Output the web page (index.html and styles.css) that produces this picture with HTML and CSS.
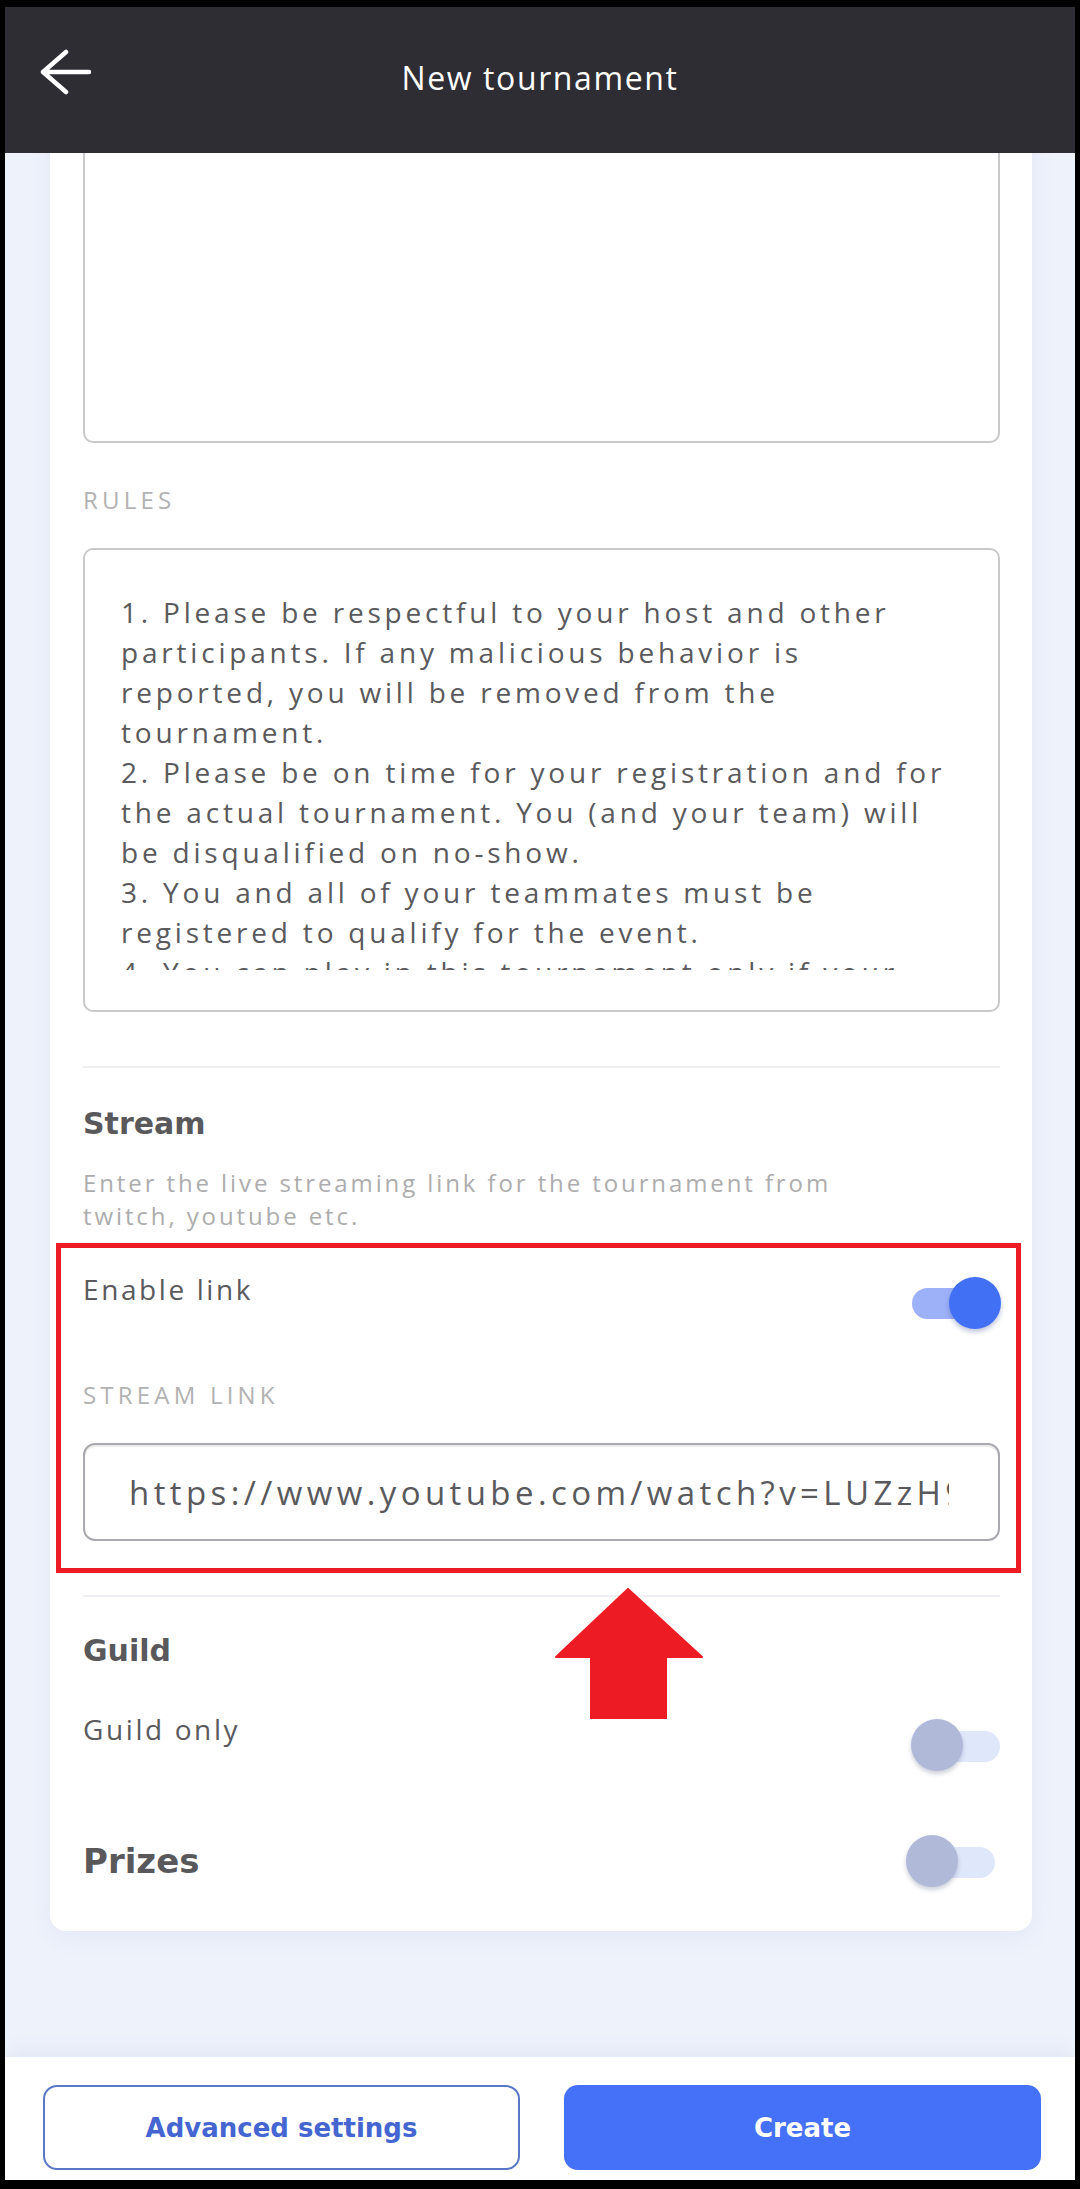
FILE: index.html
```html
<!DOCTYPE html>
<html lang="en">
<head>
<meta charset="UTF-8">
<meta name="viewport" content="width=device-width, initial-scale=1.0">
<title>New tournament</title>
<link rel="stylesheet" href="styles.css">
</head>
<body>
<div class="screen">
    <header class="topbar">
        <svg class="back" viewBox="0 0 52 48" width="52" height="48">
            <path d="M26 4 L3 24 L26 44 M3 24 H49" fill="none" stroke="#fff" stroke-width="4.5" stroke-linecap="round" stroke-linejoin="round"/>
        </svg>
        <h1 class="title">New tournament</h1>
        <span></span>
    </header>

    <main class="content">
        <section class="card">
            <div class="textbox textbox-desc"></div>

            <div class="field-label rules-label">Rules</div>
            <div class="textbox textbox-rules">
                <div class="rules-text">
                    <div>1. Please be respectful to your host and other</div>
                    <div>participants. If any malicious behavior is</div>
                    <div>reported, you will be removed from the</div>
                    <div>tournament.</div>
                    <div>2. Please be on time for your registration and for</div>
                    <div>the actual tournament. You (and your team) will</div>
                    <div>be disqualified on no-show.</div>
                    <div>3. You and all of your teammates must be</div>
                    <div>registered to qualify for the event.</div>
                    <div>4. You can play in this tournament only if your</div>
                </div>
            </div>

            <hr class="divider">

            <h2 class="section-title">Stream</h2>
            <p class="section-desc">Enter the live streaming link for the tournament from<br>twitch, youtube etc.</p>

            <div class="stream-link">
                <div class="toggle-row">
                    <span class="row-label">Enable link</span>
                    <div class="toggle toggle-on"><span class="track"></span><span class="knob"></span></div>
                </div>
                <div class="field-label stream-label">Stream link</div>
                <input class="text-input" type="text" readonly value="https://www.youtube.com/watch?v=LUZzH9">

                <div class="highlight"></div>
                <svg class="pointer" viewBox="0 0 148 131" width="148" height="131">
                    <polygon points="73,1 147,69 111,69 111,131 36,131 36,69 1,69" fill="#ed1c24" stroke="#ed1c24" stroke-width="2" stroke-linejoin="round"/>
                </svg>
            </div>

            <hr class="divider">

            <h2 class="section-title guild-title">Guild</h2>
            <div class="toggle-row guild-row">
                <span class="row-label">Guild only</span>
                <div class="toggle toggle-off"><span class="track"></span><span class="knob"></span></div>
            </div>

            <div class="toggle-row prizes-row">
                <h2 class="prizes-title">Prizes</h2>
                <div class="toggle toggle-off"><span class="track"></span><span class="knob"></span></div>
            </div>
        </section>
    </main>

    <footer class="actions">
        <button class="btn btn-outline">Advanced settings</button>
        <button class="btn btn-primary">Create</button>
    </footer>
</div>
</body>
</html>
```

FILE: styles.css
```css
* {
    box-sizing: border-box;
}
body {
    margin: 0;
    background-color: #000;
    font-family: "Open Sans", "Noto Sans", sans-serif;
}
.screen {
    width: 1070px;
    height: 2173px;
    margin: 7px 5px 0;
    display: flex;
    flex-direction: column;
    overflow: hidden;
}

/* barra superior */
.topbar {
    flex: none;
    height: 146px;
    padding-bottom: 5px;
    background-color: #2e2d33;
    display: grid;
    grid-template-columns: 90px 1fr 90px;
    align-items: center;
}
.back {
    align-self: start;
    margin: 41px 0 0 35px;
}
.title {
    margin: 0;
    font-size: 32px;
    line-height: 40px;
    font-weight: 400;
    letter-spacing: 1.6px;
    color: #fff;
    text-align: center;
}

/* contenido */
.content {
    flex: 1;
    min-height: 0;
    overflow: hidden;
    background-color: #eef2fb;
    padding: 0 43px 0 45px;
}
.card {
    margin-top: -120px;
    padding: 33px 32px 44px 33px;
    background-color: #fff;
    border-radius: 16px;
    box-shadow: 0 6px 24px rgba(80, 100, 170, 0.07);
}
.textbox {
    border: 2px solid #c9c9c9;
    border-radius: 10px;
    background-color: #fff;
}
.textbox-desc {
    height: 377px;
}
.field-label {
    font-size: 24px;
    line-height: 30px;
    letter-spacing: 4.2px;
    color: #b2b2b2;
    text-transform: uppercase;
}
.rules-label {
    margin: 42px 0 33px;
}
.textbox-rules {
    height: 464px;
    padding: 42px 30px 40px 36px;
}
.rules-text {
    height: 100%;
    overflow: hidden;
    font-size: 28px;
    line-height: 40px;
    letter-spacing: 3.8px;
    color: #5a5a5d;
    white-space: nowrap;
}
.divider {
    border: 0;
    height: 2px;
    margin: 54px 0 0;
    background-color: #eff0f3;
}
.section-title {
    margin: 37px 0 0;
    font-family: "DejaVu Sans", sans-serif;
    font-weight: 700;
    font-size: 30px;
    line-height: 38px;
    color: #59595c;
}
.section-desc {
    margin: 23px 0 0;
    font-size: 24px;
    line-height: 33px;
    letter-spacing: 2.9px;
    color: #adadad;
    white-space: nowrap;
}

/* enlace del stream */
.stream-link {
    position: relative;
    margin-top: 37px;
}
.toggle-row {
    display: flex;
    justify-content: space-between;
    align-items: flex-start;
}
.row-label {
    font-size: 28px;
    line-height: 40px;
    letter-spacing: 2.6px;
    color: #5a5a5d;
}
.stream-label {
    margin-top: 51px;
}
.text-input {
    display: block;
    width: 100%;
    height: 98px;
    margin-top: 33px;
    padding: 0 49px 0 44px;
    border: 2px solid #a9a9b0;
    border-radius: 12px;
    box-shadow: inset 0 2px 1px rgba(0, 0, 0, 0.08);
    background-color: #fff;
    font-family: inherit;
    font-size: 33px;
    letter-spacing: 4.4px;
    color: #5a5a5d;
    outline: none;
}
.highlight {
    position: absolute;
    top: -26px;
    bottom: -32px;
    left: -27px;
    right: -21px;
    border: 5px solid #ed1c24;
    pointer-events: none;
}
.pointer {
    position: absolute;
    left: 472px;
    top: 319px;
    z-index: 2;
}

/* interruptores */
.toggle {
    position: relative;
    flex: none;
    width: 89px;
    height: 52px;
    margin-top: 8px;
}
.track {
    position: absolute;
    height: 31px;
    border-radius: 16px;
}
.knob {
    position: absolute;
    top: 0;
    width: 52px;
    height: 52px;
    border-radius: 50%;
}
.toggle-on {
    margin-right: -1px;
}
.toggle-on .track {
    left: 0;
    top: 11px;
    width: 72px;
    background-color: #9db1f9;
}
.toggle-on .knob {
    right: 0;
    background-color: #4270f5;
    box-shadow: 0 3px 5px rgba(40, 60, 140, 0.3);
}
.toggle-off .track {
    left: 20px;
    right: 0;
    top: 12px;
    background-color: #dfe7fb;
}
.toggle-off .knob {
    left: 0;
    background-color: #b1b9d8;
    box-shadow: 0 3px 4px rgba(60, 70, 110, 0.25);
}
.guild-title {
    margin-top: 35px;
}
.guild-row {
    margin-top: 39px;
}
.guild-row .toggle {
    margin-top: 10px;
}
.prizes-row {
    margin-top: 64px;
    align-items: center;
}
.prizes-row .toggle {
    margin: 0 5px 0 0;
}
.prizes-title {
    margin: 0;
    font-family: "DejaVu Sans", sans-serif;
    font-weight: 700;
    font-size: 34px;
    line-height: 44px;
    color: #59595c;
}

/* botones */
.actions {
    position: relative;
    flex: none;
    height: 123px;
    padding: 28px 34px 0 38px;
    background-color: #fff;
    display: grid;
    grid-template-columns: 1fr 1fr;
    column-gap: 44px;
    align-items: start;
    box-shadow: 0 -6px 20px rgba(60, 80, 160, 0.07);
}
.btn {
    height: 85px;
    border-radius: 14px;
    font-family: "DejaVu Sans", sans-serif;
    font-weight: 700;
    font-size: 26px;
    cursor: pointer;
}
.btn-outline {
    border: 2px solid #5b78c6;
    background-color: #fff;
    color: #4566d1;
}
.btn-primary {
    border: 0;
    background-color: #4570f8;
    color: #fff;
}
```
